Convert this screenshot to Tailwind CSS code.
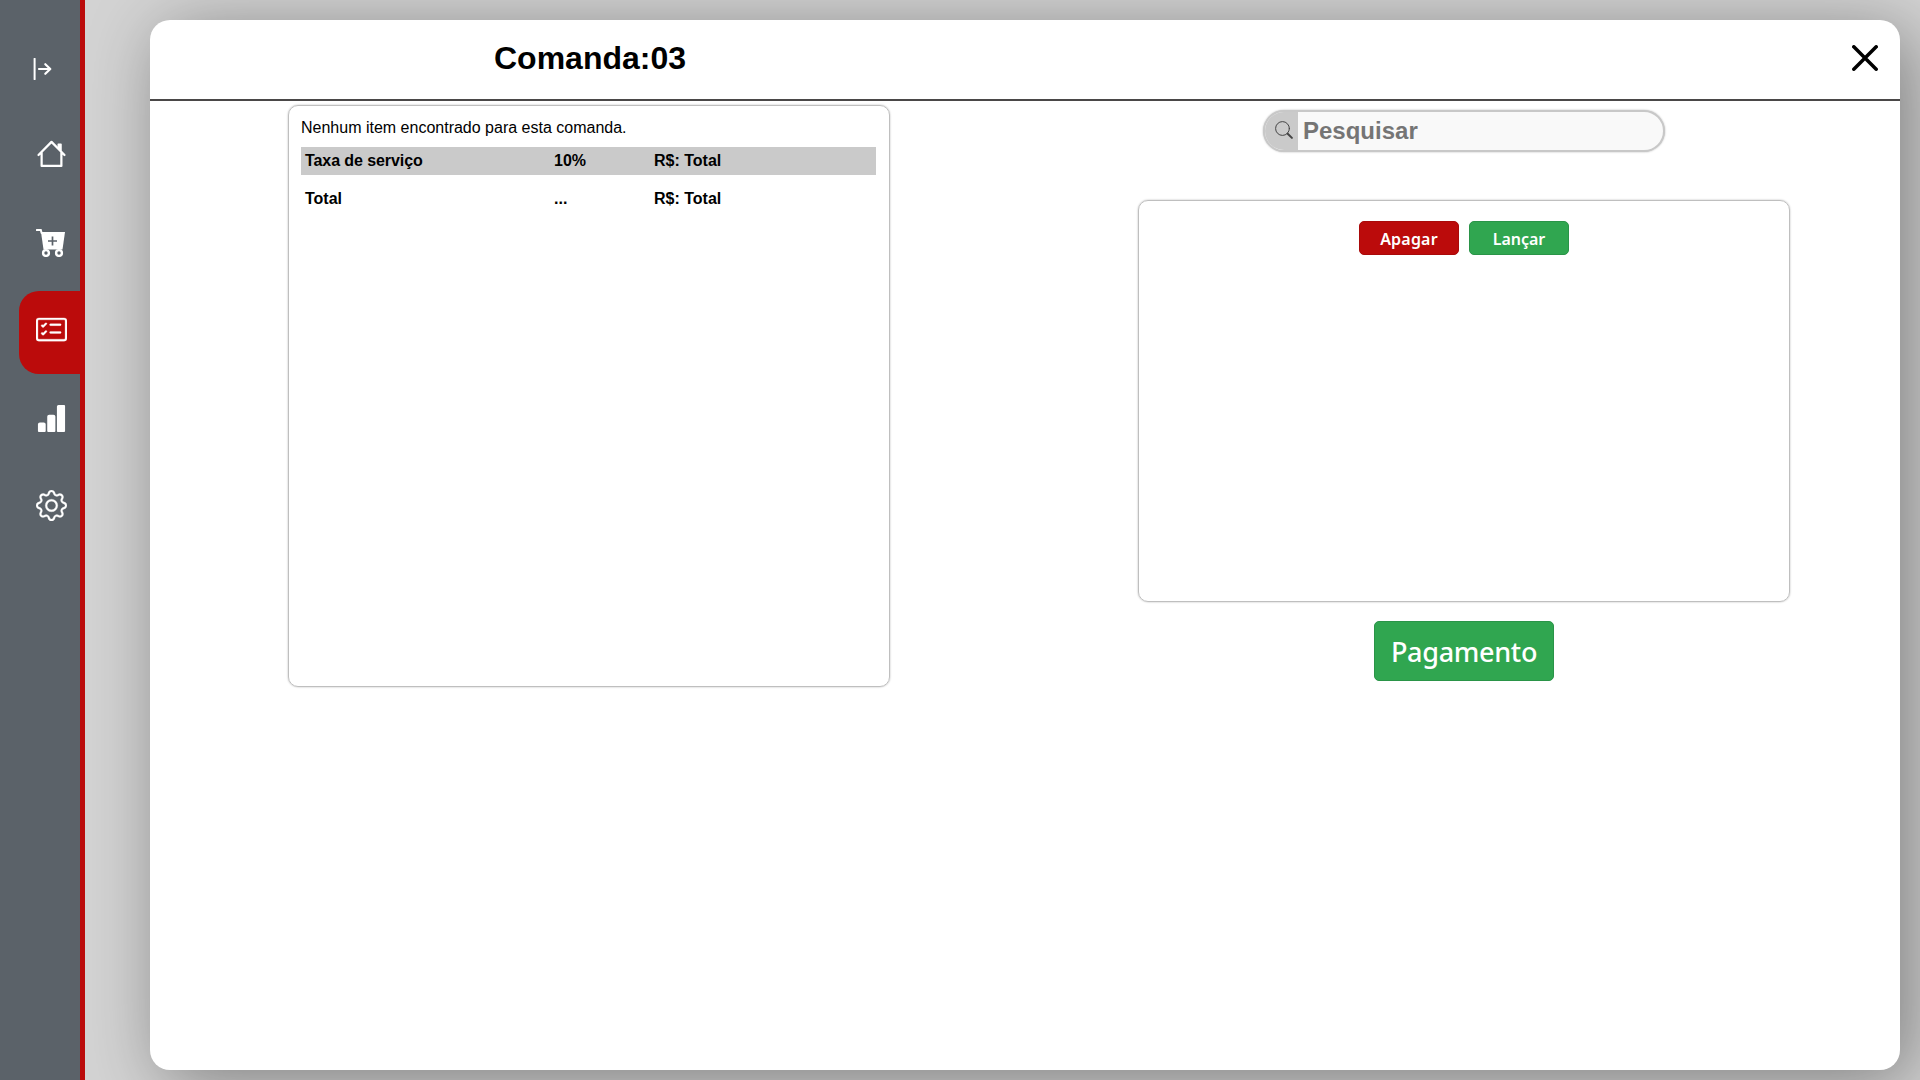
<!DOCTYPE html>
<html lang="pt-BR">
<head>
<meta charset="utf-8">
<title>Comanda</title>
<script src="https://cdn.jsdelivr.net/npm/@tailwindcss/browser@4"></script>
</head>
<body class="flex h-screen overflow-hidden bg-[#d3d3d3] font-['Liberation_Sans',Arial,sans-serif] text-black">
<aside class="z-10 flex w-[85px] shrink-0 flex-col border-r-[5px] border-[#bb0b0b] bg-[#5b6269] text-white">
  <button class="flex h-[115px] items-start pt-[58px] pl-[33px]">
    <svg width="19" height="22" viewBox="0 0 19 22" fill="none" stroke="currentColor" stroke-width="2.2" stroke-linecap="round" stroke-linejoin="round"><path d="M1.600 .8v20.400" stroke-width="2"/><path d="M6 11h11.200M12.300 6.200L17.300 11l-5 4.800"/></svg>
  </button>
  <nav class="flex flex-col gap-[5px] pl-[19px]">
    <a class="flex h-[83px] items-start pt-6 pl-[17px]"><svg width="31" height="31" viewBox="0 0 16 16" fill="none" stroke="currentColor" stroke-width="1.150" stroke-linecap="round" stroke-linejoin="round"><path d="M1.300 8.300L8 1.500l6.700 6.800M2.900 7v6.900h10.200V7"/><path d="M11.500 2.700h1.400v3.100l-1.400-1.400z" fill="currentColor" stroke-width=".8"/></svg></a>
    <a class="flex h-[83px] items-start pt-[26px] pl-[17px]"><svg width="30" height="28" viewBox="0 0 30 28" fill="none" stroke="currentColor"><path d="M.8 1h4l.8 3" stroke-width="2" stroke-linecap="round"/><path d="M5 3h24l-2.500 17.500H7.500z" fill="currentColor" stroke="none"/><path d="M16.500 7.500v9M12 12h9" stroke="#5b6269" stroke-width="1.700"/><circle cx="10" cy="24" r="2.900" stroke-width="2.400"/><circle cx="23" cy="24" r="2.900" stroke-width="2.400"/></svg></a>
    <a class="flex h-[83px] items-start rounded-l-[20px] bg-[#bb0b0b] pt-[23px] pl-[17px]"><svg width="31" height="31" viewBox="0 0 16 16" fill="currentColor" stroke="currentColor" stroke-width=".15"><path d="M14.500 3a.5.5 0 0 1 .5.5v9a.5.5 0 0 1-.5.5h-13a.5.5 0 0 1-.5-.5v-9a.5.5 0 0 1 .5-.5zm-13-1A1.500 1.500 0 0 0 0 3.500v9A1.500 1.500 0 0 0 1.500 14h13a1.500 1.500 0 0 0 1.500-1.500v-9A1.500 1.500 0 0 0 14.500 2z"/><path d="M7 5.500a.5.5 0 0 1 .5-.5h5a.5.5 0 0 1 0 1h-5a.5.5 0 0 1-.5-.5m-1.496-.854a.5.5 0 0 1 0 .708l-1.500 1.500a.5.5 0 0 1-.708 0l-.5-.5a.5.5 0 1 1 .708-.708l.146.147 1.146-1.147a.5.5 0 0 1 .708 0M7 9.500a.5.5 0 0 1 .5-.5h5a.5.5 0 0 1 0 1h-5a.5.5 0 0 1-.5-.5m-1.496-.854a.5.5 0 0 1 0 .708l-1.500 1.500a.5.5 0 0 1-.708 0l-.5-.5a.5.5 0 0 1 .708-.708l.146.147 1.146-1.147a.5.5 0 0 1 .708 0"/></svg></a>
    <a class="flex h-[83px] items-start pt-6 pl-[17px]"><svg width="31" height="31" viewBox="0 0 16 16" fill="currentColor"><path d="M1 11a1 1 0 0 1 1-1h2a1 1 0 0 1 1 1v3.500a.5.5 0 0 1-.5.5h-3a.5.5 0 0 1-.5-.5zM5.800 7a1 1 0 0 1 1-1h2.200a1 1 0 0 1 1 1v7.500a.5.5 0 0 1-.5.5H6.300a.5.5 0 0 1-.5-.5zM10.800 1.800a.8.8 0 0 1 .8-.8h2.900a.5.5 0 0 1 .5.5v13a.5.5 0 0 1-.5.5h-3.200a.5.5 0 0 1-.5-.5z"/></svg></a>
    <a class="flex h-[83px] items-start pt-[23px] pl-[17px]"><svg width="31" height="31" viewBox="0 0 16 16" fill="currentColor" stroke="currentColor" stroke-width=".15"><path d="M8 4.754a3.246 3.246 0 1 0 0 6.492 3.246 3.246 0 0 0 0-6.492M5.754 8a2.246 2.246 0 1 1 4.492 0 2.246 2.246 0 0 1-4.492 0"/><path d="M9.796 1.343c-.527-1.790-3.065-1.790-3.592 0l-.094.319a.873.873 0 0 1-1.255.520l-.292-.160c-1.640-.892-3.433.902-2.540 2.541l.159.292a.873.873 0 0 1-.520 1.255l-.319.094c-1.790.527-1.790 3.065 0 3.592l.319.094a.873.873 0 0 1 .520 1.255l-.160.292c-.892 1.640.901 3.434 2.541 2.540l.292-.159a.873.873 0 0 1 1.255.520l.094.319c.527 1.790 3.065 1.790 3.592 0l.094-.319a.873.873 0 0 1 1.255-.520l.292.160c1.640.893 3.434-.902 2.540-2.541l-.159-.292a.873.873 0 0 1 .520-1.255l.319-.094c1.790-.527 1.790-3.065 0-3.592l-.319-.094a.873.873 0 0 1-.520-1.255l.160-.292c.893-1.640-.902-3.433-2.541-2.540l-.292.159a.873.873 0 0 1-1.255-.520zm-2.633.283c.246-.835 1.428-.835 1.674 0l.094.319a1.873 1.873 0 0 0 2.693 1.115l.291-.160c.764-.415 1.600.420 1.184 1.185l-.159.292a1.873 1.873 0 0 0 1.116 2.692l.318.094c.835.246.835 1.428 0 1.674l-.319.094a1.873 1.873 0 0 0-1.115 2.693l.160.291c.415.764-.420 1.600-1.185 1.184l-.291-.159a1.873 1.873 0 0 0-2.693 1.116l-.094.318c-.246.835-1.428.835-1.674 0l-.094-.319a1.873 1.873 0 0 0-2.692-1.115l-.292.160c-.764.415-1.600-.420-1.184-1.185l.159-.291A1.873 1.873 0 0 0 1.945 8.930l-.319-.094c-.835-.246-.835-1.428 0-1.674l.319-.094A1.873 1.873 0 0 0 3.060 4.377l-.160-.292c-.415-.764.420-1.600 1.185-1.184l.292.159a1.873 1.873 0 0 0 2.692-1.115z"/></svg></a>
  </nav>
</aside>
<main class="my-[20px] mr-5 ml-[65px] flex h-[1050px] w-[1750px] flex-col rounded-[20px] bg-white shadow-[12px_12px_72px_rgba(0,0,0,0.4)]">
  <header class="flex h-[81px] shrink-0 items-start justify-between border-b-2 border-[#4a4848] pr-[22px] pl-[344px]">
    <h1 class="pt-5 text-[32px] leading-[36px] font-bold">Comanda:03</h1>
    <button class="pt-[25px]"><svg width="26" height="26" viewBox="0 0 26 26" fill="none" stroke="currentColor" stroke-width="3.500" stroke-linecap="round"><path d="M1.800 1.800l22.400 22.400M24.200 1.800L1.800 24.200"/></svg></button>
  </header>
  <div class="flex items-start">
    <section class="mt-1 ml-[138px] h-[582px] w-[602px] rounded-[10px] border border-[#bfbfbf] px-3 pt-[13px] shadow-[0_0_2px_rgba(0,0,0,0.3)]">
      <p class="h-7 leading-[18px]">Nenhum item encontrado para esta comanda.</p>
      <div class="grid h-7 w-[575px] grid-cols-[249px_100px_1fr] bg-[#cacaca] pt-[5px] pl-1 leading-[18px] font-bold"><span class="tracking-[-0.08px]">Taxa de serviço</span><span>10%</span><span>R$: Total</span></div>
      <div class="mt-[10px] grid h-7 w-[575px] grid-cols-[249px_100px_1fr] pt-[5px] pl-1 leading-[18px] font-bold"><span>Total</span><span>...</span><span>R$: Total</span></div>
    </section>
    <section class="ml-[248px] flex w-[652px] flex-col items-center pt-[9px]">
      <label class="flex h-[42px] w-[402px] overflow-hidden rounded-full border-2 border-[#c8c8c8] bg-[#f9f9f9] shadow-[0_0_2px_rgba(0,0,0,0.3)]">
        <span class="flex w-[33px] items-center bg-[#cacaca] pl-[10px] text-[#444]"><svg class="-mt-[3px]" width="18" height="18" viewBox="0 0 18 18" fill="none" stroke="currentColor" stroke-linecap="round"><circle cx="7.500" cy="7.500" r="6.900"/><path d="M12.700 12.700l4.200 4.200" stroke-width="2"/></svg></span>
        <span class="pt-[5px] pl-[5px] text-2xl leading-[28px] font-bold text-[#757575]">Pesquisar</span>
      </label>
      <div class="mt-12 flex h-[402px] w-full items-start justify-center gap-[10px] rounded-[10px] border border-[#bfbfbf] pt-5 font-['Noto_Sans',sans-serif] font-semibold text-white shadow-[0_0_2px_rgba(0,0,0,0.3)]">
        <button class="h-[34px] w-[100px] rounded-[5px] border border-[#a90a0a] bg-[#bb0b0b] pt-px tracking-[0.2px]">Apagar</button>
        <button class="h-[34px] w-[100px] rounded-[5px] border border-[#2a9448] bg-[#30a650] pt-px">Lançar</button>
      </div>
      <button class="mt-[19px] h-[60px] w-[180px] rounded-[5px] border border-[#2a9448] bg-[#30a650] pt-[3px] font-['Noto_Sans',sans-serif] text-[27px] font-medium tracking-[-0.3px] text-white">Pagamento</button>
    </section>
  </div>
</main>
</body>
</html>
